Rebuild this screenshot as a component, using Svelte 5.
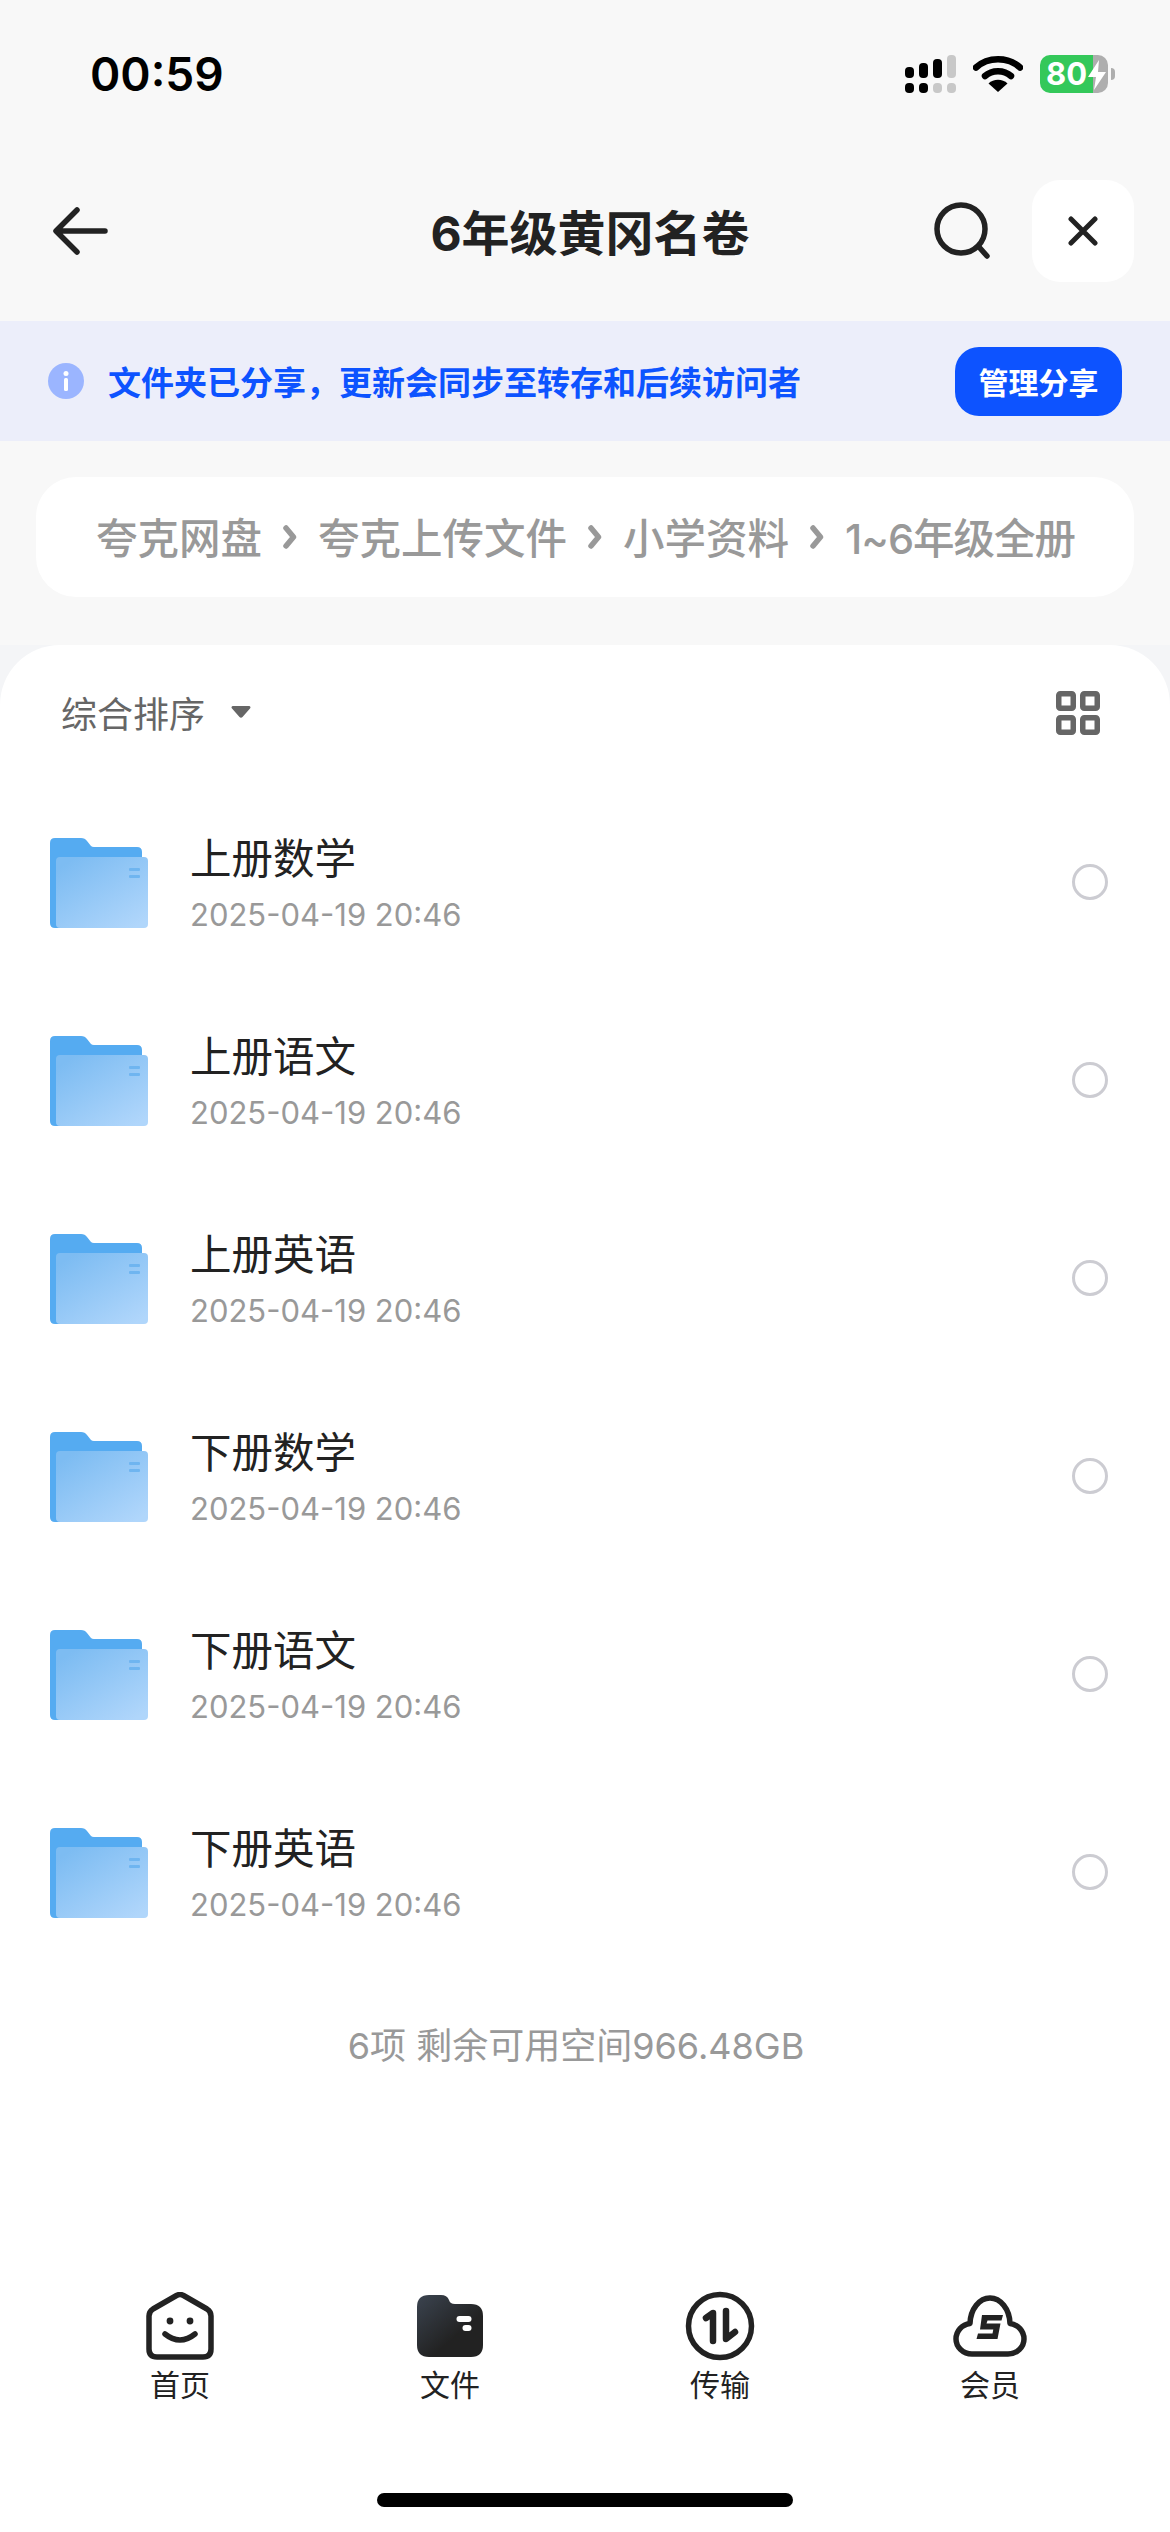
<script>
  const crumbs = ["夸克网盘", "夸克上传文件", "小学资料", "1~6年级全册"];
  const files = ["上册数学", "上册语文", "上册英语", "下册数学", "下册语文", "下册英语"];
  const date = "2025-04-19 20:46";
  const tabs = ["首页", "文件", "传输", "会员"];
</script>

<div class="page">
  <div class="status">
    <span class="time">00:59</span>
    <div class="status-icons">
      <svg class="signal" width="52" height="38" viewBox="0 0 52 38">
        <g fill="#000">
          <rect x="1" y="12" width="9" height="11" rx="4" />
          <rect x="15" y="8" width="9" height="15" rx="4" />
          <rect x="29" y="4" width="9" height="19" rx="4" />
          <rect x="1" y="28" width="9" height="10" rx="4" />
          <rect x="15" y="28" width="9" height="10" rx="4" />
        </g>
        <g fill="#c8c8c8">
          <rect x="43" y="0" width="9" height="23" rx="4" />
          <rect x="29" y="28" width="9" height="10" rx="4" />
          <rect x="43" y="28" width="9" height="10" rx="4" />
        </g>
      </svg>
      <svg class="wifi" width="50" height="38" viewBox="0 0 50 38">
        <path d="M3 12.5C15 1.5 35 1.5 47 12.5" fill="none" stroke="#000" stroke-width="6.5" stroke-linecap="round" />
        <path d="M12 21C19 14.5 31 14.5 38 21" fill="none" stroke="#000" stroke-width="6.5" stroke-linecap="round" />
        <path d="M25 37L15.5 28.5C20.5 23.5 29.5 23.5 34.5 28.5Z" fill="#000" />
      </svg>
      <div class="battery">
        <span class="level">80</span>
        <svg class="bolt" width="20" height="30" viewBox="0 0 20 30">
          <path d="M12 0L1 17H9L7 30L19 12H11Z" fill="#fff" />
        </svg>
        <span class="nub"></span>
      </div>
    </div>
  </div>

  <header class="topbar">
    <button class="back" aria-label="返回">
      <svg width="56" height="50" viewBox="0 0 56 50">
        <path d="M53 25H5M25 4L4 25L25 46" fill="none" stroke="#222" stroke-width="5.5" stroke-linecap="round" stroke-linejoin="round" />
      </svg>
    </button>
    <h1>6年级黄冈名卷</h1>
    <div class="top-actions">
      <svg width="58" height="58" viewBox="0 0 58 58">
        <circle cx="27" cy="27" r="24" fill="none" stroke="#222" stroke-width="5.5" />
        <path d="M45 45L53 54" stroke="#222" stroke-width="5.5" stroke-linecap="round" />
      </svg>
      <button class="close" aria-label="关闭">
        <svg width="30" height="30" viewBox="0 0 30 30">
          <path d="M3 3L27 27M27 3L3 27" stroke="#222" stroke-width="5" stroke-linecap="round" />
        </svg>
      </button>
    </div>
  </header>

  <div class="banner">
    <svg width="36" height="36" viewBox="0 0 36 36">
      <circle cx="18" cy="18" r="18" fill="#9bb5ff" />
      <circle cx="18" cy="10.5" r="2.5" fill="#fff" />
      <rect x="16" y="15" width="4" height="13" rx="1.5" fill="#fff" />
    </svg>
    <span class="banner-text">文件夹已分享，更新会同步至转存和后续访问者</span>
    <button class="manage">管理分享</button>
  </div>

  <nav class="crumbs">
    {#each crumbs as crumb, i}
      {#if i > 0}
        <svg class="chevron" width="14" height="24" viewBox="0 0 14 24">
          <path d="M3 3L10.5 12L3 21" fill="none" stroke="#999" stroke-width="5.5" stroke-linecap="round" stroke-linejoin="round" />
        </svg>
      {/if}
      <span>{crumb}</span>
    {/each}
  </nav>

  <div class="sheet-wrap">
    <main class="sheet">
      <div class="sortbar">
        <span class="sort">综合排序</span>
        <svg class="caret" width="22" height="14" viewBox="0 0 22 14">
          <path d="M3 1H19C20.5 1 21 2.5 20 3.5L12.5 12C11.7 13 10.3 13 9.5 12L2 3.5C1 2.5 1.5 1 3 1Z" fill="#666" />
        </svg>
        <svg class="grid" width="44" height="44" viewBox="0 0 44 44">
          <g fill="none" stroke="#666" stroke-width="5.5">
            <rect x="2.75" y="2.75" width="14.5" height="14.5" rx="1.5" />
            <rect x="26.75" y="2.75" width="14.5" height="14.5" rx="1.5" />
            <rect x="2.75" y="26.75" width="14.5" height="14.5" rx="1.5" />
            <rect x="26.75" y="26.75" width="14.5" height="14.5" rx="1.5" />
          </g>
        </svg>
      </div>

      <ul class="files">
        {#each files as name, i}
          <li class="row">
            <svg class="folder" width="100" height="92" viewBox="0 0 100 92">
              <defs>
                <linearGradient id="front{i}" x1="0.1" y1="0.1" x2="0.85" y2="1">
                  <stop offset="0" stop-color="#7dbcf2" />
                  <stop offset="1" stop-color="#b0d6fb" />
                </linearGradient>
              </defs>
              <path d="M0 6Q0 1 5 1H31Q35 1 37 4L41 9Q42 10 44 10H87Q92 10 92 15V86Q92 91 87 91H5Q0 91 0 86Z" fill="#55abf1" />
              <rect x="6" y="20" width="92" height="71" rx="4" fill="url(#front{i})" />
              <rect x="79" y="31" width="11" height="3" rx="1" fill="#6fb5f0" />
              <rect x="79" y="38" width="11" height="3" rx="1" fill="#6fb5f0" />
            </svg>
            <div class="meta">
              <span class="name">{name}</span>
              <span class="date">{date}</span>
            </div>
            <span class="radio"></span>
          </li>
        {/each}
      </ul>

      <p class="summary">6项 剩余可用空间966.48GB</p>

      <nav class="tabs">
        {#each tabs as tab, i}
          <div class="tab">
            <div class="tab-icon">
              {#if i === 0}
                <svg width="68" height="68" viewBox="0 0 68 68">
                  <path d="M30.5 3.5Q34 1.5 37.5 3.5L61 17Q65 19.5 65 24V57Q65 65 57 65H11Q3 65 3 57V24Q3 19.5 7 17Z" fill="none" stroke="#222" stroke-width="5.5" stroke-linejoin="round" />
                  <circle cx="24" cy="29" r="3.4" fill="#222" />
                  <circle cx="44" cy="29" r="3.4" fill="#222" />
                  <path d="M19 42Q34 54 49 42" fill="none" stroke="#222" stroke-width="5.5" stroke-linecap="round" />
                </svg>
              {:else if i === 1}
                <svg width="68" height="68" viewBox="0 0 68 68">
                  <defs>
                    <linearGradient id="tabfolder" x1="0" y1="0" x2="0.6" y2="0.65">
                      <stop offset="0" stop-color="#3b4450" />
                      <stop offset="1" stop-color="#222" />
                    </linearGradient>
                  </defs>
                  <path d="M1 15Q1 3 13 3H25Q31 3 33 8Q34 12 39 12H55Q67 12 67 24V53Q67 65 55 65H13Q1 65 1 53Z" fill="url(#tabfolder)" />
                  <rect x="40.5" y="24" width="15" height="6" rx="3" fill="#fff" />
                  <rect x="46.5" y="33" width="9" height="6" rx="3" fill="#fff" />
                </svg>
              {:else if i === 2}
                <svg width="70" height="70" viewBox="0 0 70 70">
                  <circle cx="35" cy="35" r="31.5" fill="none" stroke="#222" stroke-width="5.5" />
                  <path d="M28 50V22L21 27" fill="none" stroke="#222" stroke-width="6.5" stroke-linecap="round" stroke-linejoin="round" />
                  <path d="M41 20V48L50 41" fill="none" stroke="#222" stroke-width="6.5" stroke-linecap="round" stroke-linejoin="round" />
                </svg>
              {:else}
                <svg width="74" height="62" viewBox="0 0 74 62">
                  <path d="M19 59H55C64 59 71 52 71 44C71 36 65 29.5 57 28.5C56.5 14 47.5 3 37 3C26.5 3 17.5 14 17 28.5C9 29.5 3 36 3 44C3 52 10 59 19 59Z" fill="none" stroke="#222" stroke-width="5.5" stroke-linejoin="round" />
                  <path d="M29 20H50L48.5 25.5H34.5L33.5 28.5H47.5L44.5 44H23.5L25 38.5H39.5L40.3 34.5H27Z" fill="#222" />
                </svg>
              {/if}
            </div>
            <span class="tab-label">{tab}</span>
          </div>
        {/each}
      </nav>

      <div class="home-bar"></div>
    </main>
  </div>
</div>

<style>
  :global(body) {
    margin: 0;
    background: #f8f8f8;
  }

  .page {
    width: 1170px;
    height: 2532px;
    display: flex;
    flex-direction: column;
    overflow: hidden;
    background: #f8f8f8;
    font-family: Inter, "Noto Sans CJK SC", sans-serif;
  }

  button {
    padding: 0;
    border: 0;
    background: none;
    font: inherit;
  }

  .status {
    height: 180px;
    padding: 51px 62px 0 90px;
    box-sizing: border-box;
    display: flex;
    justify-content: space-between;
    align-items: flex-start;
  }

  .time {
    font-size: 46px;
    line-height: 46px;
    font-weight: 600;
    color: #000;
  }

  .status-icons {
    display: flex;
    align-items: center;
    margin-top: 4px;
  }

  .wifi {
    margin-left: 17px;
  }

  .battery {
    position: relative;
    width: 68px;
    height: 38px;
    margin-left: 17px;
    border-radius: 10px;
    background: linear-gradient(90deg, #34c85a 53px, #aeaeae 53px);
    display: flex;
    align-items: center;
    font-weight: 700;
    color: #fff;
  }

  .level {
    margin-left: 6px;
    font-size: 31px;
    line-height: 38px;
  }

  .bolt {
    position: absolute;
    left: 47px;
    top: 5px;
  }

  .nub {
    position: absolute;
    right: -7px;
    top: 13px;
    width: 4px;
    height: 12px;
    border-radius: 0 6px 6px 0;
    background: #aeaeae;
  }

  .topbar {
    height: 102px;
    margin-bottom: 39px;
    padding: 0 36px 0 52px;
    display: flex;
    align-items: center;
    position: relative;
  }

  .back {
    display: flex;
  }

  h1 {
    position: absolute;
    left: 0;
    right: 0;
    margin: -2px 0 0;
    padding-left: 10px;
    text-align: center;
    font-size: 48px;
    font-weight: 700;
    color: #222;
  }

  .top-actions {
    margin-left: auto;
    display: flex;
    align-items: center;
    gap: 40px;
  }

  .close {
    width: 102px;
    height: 102px;
    border-radius: 28px;
    background: #fff;
    display: flex;
    align-items: center;
    justify-content: center;
  }

  .banner {
    height: 120px;
    padding: 0 48px;
    display: flex;
    align-items: center;
    background: #eceefa;
  }

  .banner-text {
    margin-left: 24px;
    font-size: 33px;
    font-weight: 700;
    color: #0d53ff;
  }

  .manage {
    margin-left: auto;
    width: 167px;
    height: 69px;
    border-radius: 24px;
    background: #0d53ff;
    color: #fff;
    font-size: 30px;
    font-weight: 700;
  }

  .crumbs {
    height: 120px;
    margin: 36px 36px 48px;
    padding: 0 60px;
    border-radius: 40px;
    background: #fff;
    display: flex;
    align-items: center;
    gap: 21px;
    font-size: 41.5px;
    font-weight: 500;
    color: #999;
    white-space: nowrap;
  }

  .crumbs span {
    margin-top: -2px;
  }

  .crumbs span:last-child {
    letter-spacing: -1px;
  }

  .chevron {
    flex: none;
  }

  .sheet-wrap {
    flex: 1;
    display: flex;
    min-height: 0;
    background: #f4f5f7;
  }

  .sheet {
    flex: 1;
    display: flex;
    flex-direction: column;
    min-height: 0;
    border-radius: 60px 60px 0 0;
    background: #fff;
  }

  .sortbar {
    height: 136px;
    padding: 0 70px 3px 61px;
    box-sizing: border-box;
    display: flex;
    align-items: center;
  }

  .sort {
    font-size: 36px;
    color: #666;
  }

  .caret {
    margin-left: 25px;
  }

  .grid {
    margin-left: auto;
    margin-top: 3px;
  }

  .files {
    margin: 0;
    padding: 0;
    list-style: none;
  }

  .row {
    height: 198px;
    padding: 0 62px 0 50px;
    display: flex;
    align-items: center;
  }

  .folder {
    margin-top: 5px;
  }

  .meta {
    margin-left: 40px;
    margin-top: 8px;
    display: flex;
    flex-direction: column;
    gap: 15px;
  }

  .name {
    font-size: 41.5px;
    line-height: 46px;
    color: #222;
  }

  .date {
    font-size: 31px;
    line-height: 36px;
    color: #999;
  }

  .radio {
    margin-left: auto;
    margin-top: 4px;
    width: 36px;
    height: 36px;
    box-sizing: border-box;
    border: 3px solid #ccccd2;
    border-radius: 50%;
  }

  .summary {
    margin: 56px 0 0;
    padding-right: 18px;
    text-align: center;
    font-size: 36px;
    line-height: 42px;
    color: #999;
  }

  .tabs {
    margin-top: auto;
    padding: 0 45px;
    display: grid;
    grid-template-columns: repeat(4, 1fr);
  }

  .tab {
    display: flex;
    flex-direction: column;
    align-items: center;
  }

  .tab-icon {
    height: 70px;
    display: flex;
    align-items: center;
    justify-content: center;
  }

  .tab-label {
    margin-top: 4px;
    font-size: 30px;
    line-height: 40px;
    color: #222;
  }

  .home-bar {
    width: 416px;
    height: 14px;
    margin: 88px auto 25px;
    border-radius: 7px;
    background: #000;
  }
</style>
